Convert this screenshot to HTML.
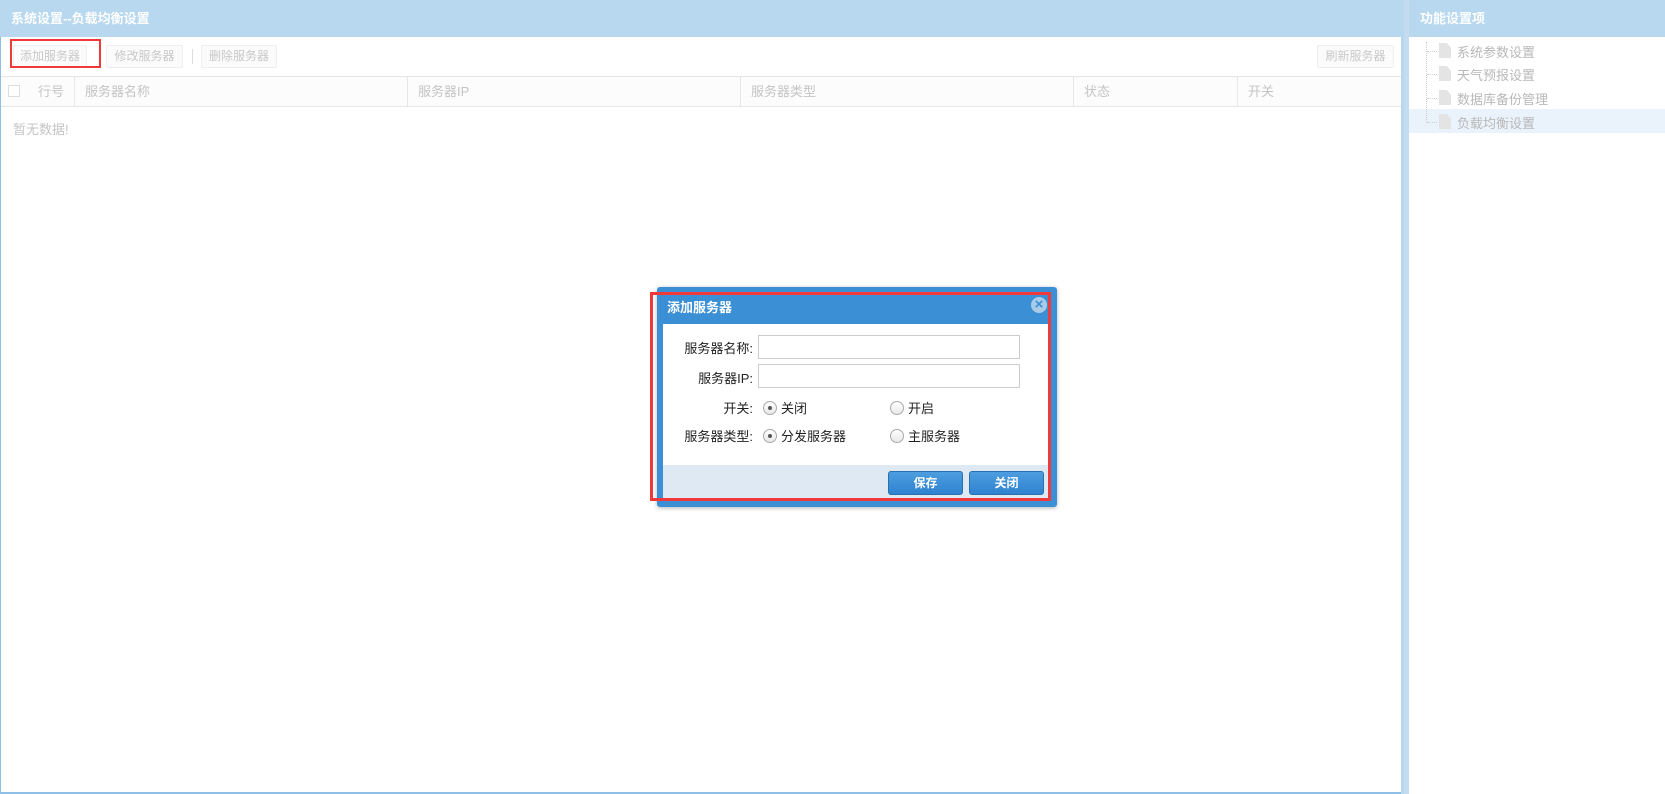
<!DOCTYPE html>
<html><head><meta charset="utf-8"><style>
*{margin:0;padding:0;box-sizing:border-box}
body{width:1665px;height:794px;position:relative;background:#fff;font-family:"Liberation Sans","Noto Sans CJK SC",sans-serif;font-size:13px;overflow:hidden}
.a{position:absolute}
.hdr{background:#b8d8ef;color:#fff;font-weight:bold;font-size:13px}
.btn{position:absolute;top:45px;height:23px;border:1px solid #eee;border-radius:2px;color:#c8c8c8;font-size:12px;line-height:21px;text-align:center;background:#fbfbfb}
.th{position:absolute;top:76px;height:31px;line-height:31px;color:#c4c4c4;font-size:13px;border-left:1px solid #e6e6e6;padding-left:10px}
.ti{position:absolute;left:1457px;color:#b8b8b8;font-size:13px}
.ic{position:absolute;left:1439px;width:12px;height:15px;background:#e4e4e4;clip-path:polygon(0 0,65% 0,100% 30%,100% 100%,0 100%)}
.dot{position:absolute;left:1427px;width:10px;border-top:1px dotted #ccc}
.lbl{position:absolute;right:912px;color:#222;font-size:13px}
.inp{position:absolute;left:758px;width:262px;height:24px;border:1px solid #ccc}
.rad{position:absolute;width:14px;height:14px;border:1px solid #aaa;border-radius:50%;background:linear-gradient(#fff,#e8e8e8)}
.rad.on::after{content:"";position:absolute;left:4px;top:4px;width:4px;height:4px;border-radius:50%;background:#555}
.rt{position:absolute;color:#222;font-size:13px}
.db{position:absolute;top:471px;width:75px;height:24px;border:1px solid #2a6fb0;border-radius:3px;background:linear-gradient(#4d9ee0,#2e82cf);color:#fff;font-weight:bold;font-size:12px;text-align:center;line-height:22px}
</style></head><body>
<div class="a hdr" style="left:0;top:0;width:1404px;height:37px;line-height:37px;padding-left:11px">系统设置--负载均衡设置</div>
<div class="a" style="left:0;top:37px;width:1px;height:757px;background:#8fbfe6"></div>
<div class="a" style="left:0;top:792px;width:1404px;height:2px;background:#8fbfe6"></div>
<div class="a" style="left:1401px;top:37px;width:3px;height:757px;background:#b8d8ef"></div>
<div class="btn" style="left:13px;width:74px">添加服务器</div>
<div class="a" style="left:10px;top:39px;width:91px;height:29px;border:2px solid #f03a3a"></div>
<div class="btn" style="left:106px;width:77px">修改服务器</div>
<div class="a" style="left:192px;top:49px;width:1px;height:15px;background:#ddd"></div>
<div class="btn" style="left:201px;width:76px">删除服务器</div>
<div class="btn" style="left:1317px;width:77px">刷新服务器</div>
<div class="a" style="left:1px;top:76px;width:1400px;height:31px;background:#fcfcfc;border-top:1px solid #e6e6e6;border-bottom:1px solid #e6e6e6"></div>
<div class="a" style="left:8px;top:85px;width:12px;height:12px;border:1px solid #ddd;background:#fff"></div>
<div class="a" style="left:38px;top:76px;line-height:31px;color:#c4c4c4">行号</div>
<div class="th" style="left:74px">服务器名称</div>
<div class="th" style="left:407px">服务器IP</div>
<div class="th" style="left:740px">服务器类型</div>
<div class="th" style="left:1073px">状态</div>
<div class="th" style="left:1237px">开关</div>
<div class="a" style="left:13px;top:119px;color:#c4c4c4">暂无数据!</div>
<div class="a" style="left:1404px;top:0;width:5px;height:794px;background:#c3dcf0"></div>
<div class="a hdr" style="left:1409px;top:0;width:256px;height:37px;line-height:37px;padding-left:11px">功能设置项</div>
<div class="a" style="left:1409px;top:109px;width:256px;height:24px;background:#eaf3fb"></div>
<div class="a" style="left:1426px;top:42px;height:80px;border-left:1px dotted #ccc"></div>
<div class="dot" style="top:51px"></div><div class="ic" style="top:43px"></div><div class="ti" style="top:42px">系统参数设置</div>
<div class="dot" style="top:74px"></div><div class="ic" style="top:66px"></div><div class="ti" style="top:65px">天气预报设置</div>
<div class="dot" style="top:98px"></div><div class="ic" style="top:90px"></div><div class="ti" style="top:89px">数据库备份管理</div>
<div class="dot" style="top:122px"></div><div class="ic" style="top:114px"></div><div class="ti" style="top:113px">负载均衡设置</div>
<div class="a" style="left:657px;top:287px;width:400px;height:220px;background:#3b8fd4;border-radius:3px;box-shadow:0 1px 4px rgba(0,0,0,.3)"></div>
<div class="a" style="left:667px;top:297px;color:#fff;font-weight:bold;font-size:13px">添加服务器</div>
<div class="a" style="left:1031px;top:297px;width:16px;height:16px;border-radius:50%;background:#a9cbe8;color:#3b8fd4;font-size:15px;line-height:16px;text-align:center;font-weight:bold">×</div>
<div class="a" style="left:663px;top:324px;width:385px;height:141px;background:#fff"></div>
<div class="a" style="left:663px;top:465px;width:385px;height:36px;background:#dfe9f3"></div>
<div class="lbl" style="top:338px">服务器名称:</div>
<div class="inp" style="top:335px"></div>
<div class="lbl" style="top:368px">服务器IP:</div>
<div class="inp" style="top:364px"></div>
<div class="lbl" style="top:398px">开关:</div>
<div class="rad on" style="left:763px;top:401px"></div><div class="rt" style="left:781px;top:398px">关闭</div>
<div class="rad" style="left:890px;top:401px"></div><div class="rt" style="left:908px;top:398px">开启</div>
<div class="lbl" style="top:426px">服务器类型:</div>
<div class="rad on" style="left:763px;top:429px"></div><div class="rt" style="left:781px;top:426px">分发服务器</div>
<div class="rad" style="left:890px;top:429px"></div><div class="rt" style="left:908px;top:426px">主服务器</div>
<div class="db" style="left:888px">保存</div>
<div class="db" style="left:969px">关闭</div>
<div class="a" style="left:650px;top:292px;width:401px;height:209px;border:3px solid #f03a3a"></div>
</body></html>
